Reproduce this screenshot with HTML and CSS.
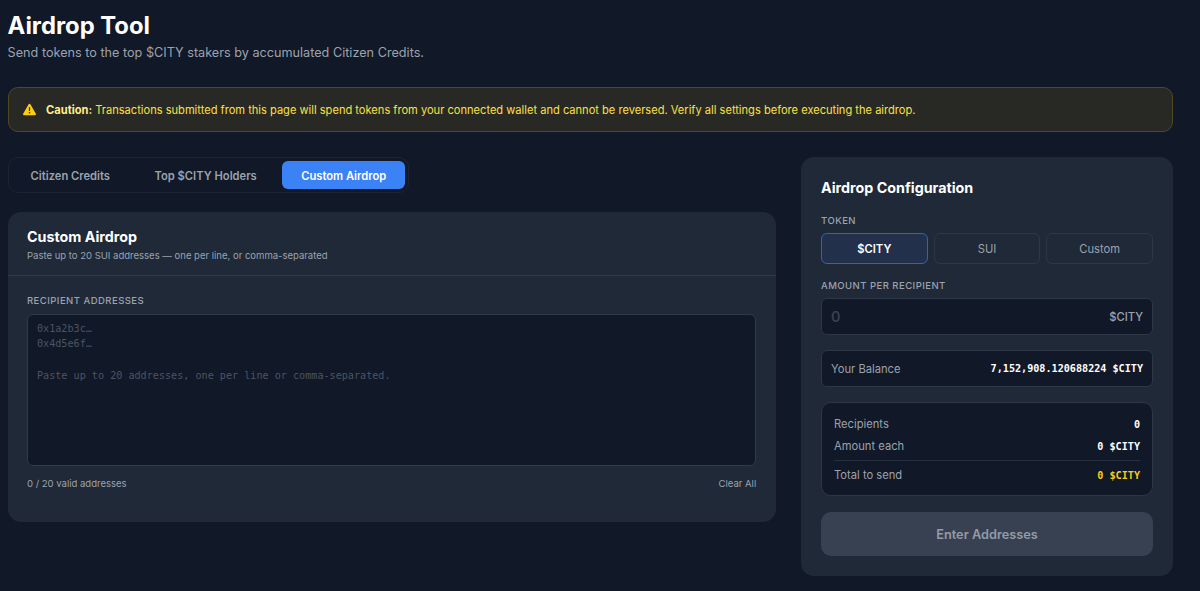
FILE: index.html
```html
<!DOCTYPE html>
<html lang="en">
<head>
    <meta charset="UTF-8">
    <meta name="viewport" content="width=device-width, initial-scale=1.0">
    <title>Airdrop Tool</title>
    <link rel="stylesheet" href="styles.css">
</head>
<body>
    <div class="page">
        <header class="page-header">
            <h1>Airdrop Tool</h1>
            <p class="subtitle">Send tokens to the top $CITY stakers by accumulated Citizen Credits.</p>
        </header>

        <div class="caution">
            <svg class="caution-icon" viewBox="0 0 512 512">
                <path fill="currentColor" d="M256 32c14.200 0 27.300 7.500 34.500 19.800l216 368c7.300 12.400 7.300 27.700.2 40.100S486.300 480 472 480H40c-14.300 0-27.600-7.700-34.700-20.100s-7-27.800.2-40.100l216-368C228.700 39.500 241.800 32 256 32zm0 128c-13.300 0-24 10.700-24 24v112c0 13.300 10.700 24 24 24s24-10.700 24-24V184c0-13.300-10.700-24-24-24zm32 224a32 32 0 1 0-64 0 32 32 0 1 0 64 0z"></path>
            </svg>
            <p><strong>Caution:</strong> Transactions submitted from this page will spend tokens from your connected wallet and cannot be reversed. Verify all settings before executing the airdrop.</p>
        </div>

        <div class="layout">
            <main class="main">
                <nav class="tabs">
                    <button class="tab">Citizen Credits</button>
                    <button class="tab">Top $CITY Holders</button>
                    <button class="tab active">Custom Airdrop</button>
                </nav>

                <section class="card">
                    <div class="card-header">
                        <h2>Custom Airdrop</h2>
                        <p>Paste up to 20 SUI addresses — one per line, or comma-separated</p>
                    </div>
                    <div class="card-body">
                        <label class="label" for="addresses">Recipient Addresses</label>
                        <textarea class="addresses" id="addresses" placeholder="0x1a2b3c…&#10;0x4d5e6f…&#10;&#10;Paste up to 20 addresses, one per line or comma-separated."></textarea>
                        <div class="card-footer">
                            <span>0 / 20 valid addresses</span>
                            <button class="clear-button">Clear All</button>
                        </div>
                    </div>
                </section>
            </main>

            <aside class="config">
                <h2>Airdrop Configuration</h2>

                <span class="label">Token</span>
                <div class="token-group">
                    <button class="token active">$CITY</button>
                    <button class="token">SUI</button>
                    <button class="token">Custom</button>
                </div>

                <label class="label" for="amount">Amount per recipient</label>
                <div class="amount-box">
                    <input class="amount" id="amount" type="text" placeholder="0">
                    <span class="unit">$CITY</span>
                </div>

                <div class="balance">
                    <span>Your Balance</span>
                    <span class="value">7,152,908.120688224 $CITY</span>
                </div>

                <div class="summary">
                    <div class="row">
                        <span>Recipients</span>
                        <span class="value">0</span>
                    </div>
                    <div class="row">
                        <span>Amount each</span>
                        <span class="value">0 $CITY</span>
                    </div>
                    <div class="row total">
                        <span>Total to send</span>
                        <span class="value">0 $CITY</span>
                    </div>
                </div>

                <button class="submit-button" disabled>Enter Addresses</button>
            </aside>
        </div>
    </div>
</body>
</html>
```
FILE: styles.css
```css
* {
    box-sizing: border-box;
    margin: 0;
    padding: 0;
}

body {
    font-family: Inter, sans-serif;
    background-color: #111827;
    color: #9ca3af;
    min-height: 100vh;
    overflow: hidden;
}

button,
input,
textarea {
    font-family: inherit;
    color: inherit;
    background: none;
    border: none;
    outline: none;
}

.page {
    width: 1172.6px;
    padding: 11px 0 0 7.6px;
}

h1 {
    font-size: 23.8px;
    font-weight: 700;
    line-height: 29px;
    color: #ffffff;
}

.subtitle {
    font-size: 12.67px;
    line-height: 20px;
    margin-top: 3px;
}

.caution {
    display: flex;
    align-items: center;
    height: 45px;
    margin-top: 24px;
    padding: 0 14px;
    gap: 10.5px;
    border: 1px solid #4f4920;
    border-radius: 10px;
    background-color: #282824;
    color: #fde047;
    font-size: 11.1px;
}

.caution-icon {
    width: 13px;
    height: 13px;
    color: #facc15;
}

.caution strong {
    font-weight: 700;
    color: #fef08a;
}

.layout {
    display: grid;
    grid-template-columns: 768px 371.6px;
    justify-content: space-between;
    align-items: start;
    margin-top: 25px;
}

.tabs {
    display: flex;
    width: 401px;
    height: 36px;
    padding: 3px;
    border: 1px solid #1c2534;
    border-radius: 10px;
}

.tab {
    flex: none;
    padding: 1px 19px 0;
    border-radius: 6px;
    font-size: 11.2px;
    font-weight: 600;
}

.tab + .tab {
    margin-left: 6.4px;
}

.tab.active {
    background-color: #3b82f6;
    color: #ffffff;
}

.card,
.config {
    background-color: #1f2937;
    border-radius: 13px;
}

.card {
    height: 310px;
    margin-top: 19px;
}

.card-header {
    height: 64px;
    padding: 15px 19.4px 0;
    border-bottom: 1px solid #303a48;
}

h2 {
    font-size: 14.3px;
    font-weight: 700;
    line-height: 20px;
    color: #ffffff;
}

.card-header p {
    font-size: 9.52px;
    line-height: 16px;
    margin-top: 1px;
}

.card-body {
    padding: 17px 19.4px 0;
}

.label {
    display: block;
    font-size: 9.52px;
    font-weight: 500;
    line-height: 16px;
    letter-spacing: 0.46px;
    text-transform: uppercase;
}

.addresses {
    display: block;
    width: 100%;
    height: 152px;
    margin-top: 4.5px;
    padding: 6px 9px;
    border: 1px solid #303a48;
    border-radius: 6px;
    background-color: #111827;
    font-family: "DejaVu Sans Mono", monospace;
    font-size: 10.15px;
    line-height: 15.85px;
    resize: none;
}

.addresses::placeholder {
    color: #4b5563;
}

.card-footer {
    display: flex;
    justify-content: space-between;
    align-items: center;
    height: 16px;
    margin-top: 9.5px;
    font-size: 9.52px;
}

.clear-button {
    font-size: 9.52px;
}

.config {
    height: 418.5px;
    padding: 21px 19.6px 0 20px;
}

.config h2 {
    margin-bottom: 15px;
}

.token-group {
    display: grid;
    grid-template-columns: repeat(3, 1fr);
    gap: 6px;
    margin: 4px 0 14px;
}

.token {
    height: 31px;
    border: 1px solid #2d3746;
    border-radius: 6px;
    font-size: 11.2px;
}

.token.active {
    border-color: #3563b2;
    background-color: #22304b;
    color: #ffffff;
    font-weight: 600;
}

.amount-box,
.balance,
.summary {
    border: 1px solid #2d3746;
    background-color: #111827;
}

.amount-box,
.balance {
    display: flex;
    align-items: center;
    justify-content: space-between;
    height: 37px;
    padding: 0 9px;
    border-radius: 6px;
    font-size: 11.2px;
}

.amount-box {
    margin-top: 4px;
}

.amount {
    width: 200px;
    font-size: 14.3px;
    font-weight: 600;
}

.amount::placeholder {
    color: #374151;
}

.unit {
    font-weight: 500;
}

.balance {
    margin-top: 15px;
}

.value {
    font-family: "DejaVu Sans Mono", monospace;
    font-size: 10.15px;
    font-weight: 600;
    color: #ffffff;
}

.summary {
    height: 94px;
    margin-top: 15px;
    padding: 10px 12px 0;
    border-radius: 10px;
    font-size: 11.2px;
}

.row {
    display: flex;
    align-items: center;
    justify-content: space-between;
    height: 22px;
}

.total {
    height: 29px;
    margin-top: 3px;
    border-top: 1px solid #263040;
}

.total .value {
    color: #facc15;
}

.submit-button {
    width: 100%;
    height: 44px;
    margin-top: 16px;
    border-radius: 10px;
    background-color: #374151;
    color: #949ba7;
    font-size: 12.75px;
    font-weight: 600;
}
```
